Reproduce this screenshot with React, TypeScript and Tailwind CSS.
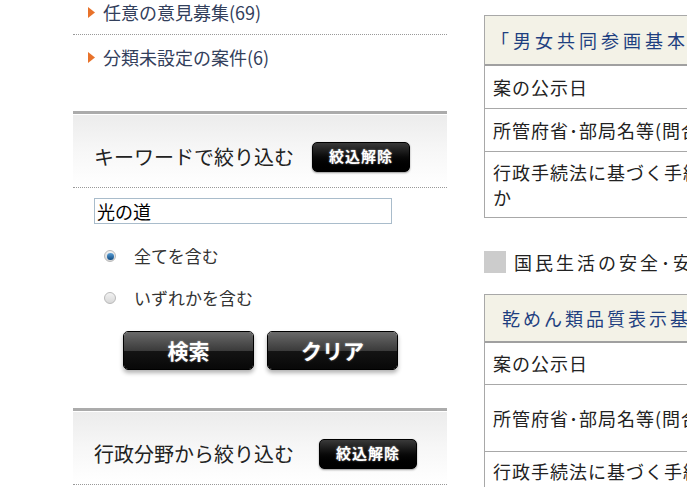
const JP = "font-['Noto_Sans_CJK_JP','Noto_Sans',sans-serif]";

function Arrow() {
  return (
    <svg width="7" height="11" viewBox="0 0 7 11" className="shrink-0">
      <polygon points="0,0 7,5.5 0,11" fill="#e8722a" />
    </svg>
  );
}

function ClearButton() {
  return (
    <span className="inline-flex items-center justify-center w-[98px] h-[30px] rounded-[5px] bg-gradient-to-b from-[#3a3a3a] via-[#0a0a0a] to-black border border-black shadow-[0_1px_2px_rgba(0,0,0,0.4)] text-white text-[15px] font-bold tracking-[1px] [text-shadow:0_0_2px_rgba(255,255,255,0.6)]">
      絞込解除
    </span>
  );
}

function BigButton({ label }: { label: string }) {
  return (
    <button
      type="button"
      className="relative w-[131px] h-[39px] rounded-[5px] border border-black overflow-hidden shadow-[0_3px_4px_rgba(0,0,0,0.3)] text-white text-[21px] font-bold [text-shadow:0_0_2px_rgba(255,255,255,0.5)]"
    >
      <span className="absolute inset-x-0 top-0 h-1/2 bg-gradient-to-b from-[#6a6a6a] to-[#3a3a3a]" />
      <span className="absolute inset-x-0 bottom-0 h-1/2 bg-gradient-to-b from-[#141414] to-[#080808]" />
      <span className="relative">{label}</span>
    </button>
  );
}

function Radio({ checked }: { checked?: boolean }) {
  return (
    <span className="w-[12px] h-[12px] rounded-full border border-[#b9b9b9] bg-gradient-to-b from-[#f2f2f2] to-[#d8d8d8] flex items-center justify-center">
      {checked && <span className="w-[7px] h-[7px] rounded-full bg-gradient-to-b from-[#5aa0d8] to-[#0d4a80]" />}
    </span>
  );
}

function FilterHead({ title, btnOffset }: { title: string; btnOffset: string }) {
  return (
    <div className="border-b border-dotted border-[#999]">
      <div className="h-[76px] border-t-[3px] border-solid border-[#ababab]">
        <div className="h-full border-t border-white bg-gradient-to-b from-[#ececec] via-[#f7f7f7] to-white flex items-center pl-[21px] pt-[11px]">
          <span className="text-[20px] text-[#222]">{title}</span>
          <span className={btnOffset}>
            <ClearButton />
          </span>
        </div>
      </div>
    </div>
  );
}

function Row({ children, h }: { children: React.ReactNode; h: string }) {
  return (
    <div className={`${h} border-b border-[#a8a8a8] flex items-center pl-[8px] text-[18px] tracking-[1px] text-[#222] leading-[25px] whitespace-nowrap`}>
      {children}
    </div>
  );
}

export default function App() {
  return (
    <div className={`w-[687px] h-[487px] overflow-hidden bg-white flex ${JP}`}>
      {/* Left filter column */}
      <div className="ml-[73px] w-[374px] shrink-0">
        <div className="h-[35px] border-b border-dotted border-[#999] flex items-start gap-[8px] pl-[15px] text-[18px] text-[#33405c] leading-[24px]">
          <span className="pt-[7px]"><Arrow /></span>
          任意の意見募集(69)
        </div>
        <div className="h-[76px] flex items-start gap-[8px] pl-[15px] pt-[10px] text-[18px] text-[#33405c] leading-[24px]">
          <span className="pt-[7px]"><Arrow /></span>
          分類未設定の案件(6)
        </div>

        <FilterHead title="キーワードで絞り込む" btnOffset="ml-[18px]" />

        <div className="pl-[21px] pt-[10px]">
          <div className="w-[298px] h-[26px] border border-[#a9bccb] flex items-center pl-[2px] text-[18px] leading-none text-black">
            光の道
          </div>
          <div className="flex items-center h-[42px] mt-[11px] pl-[10px] gap-[18px] text-[17px] text-[#333]">
            <Radio checked />
            全てを含む
          </div>
          <div className="flex items-center h-[42px] pl-[10px] gap-[18px] text-[17px] text-[#333]">
            <Radio />
            いずれかを含む
          </div>
          <div className="flex gap-[13px] pl-[29px] mt-[12px]">
            <BigButton label="検索" />
            <BigButton label="クリア" />
          </div>
        </div>

        <div className="mt-[38px]">
          <FilterHead title="行政分野から絞り込む" btnOffset="ml-[25px]" />
        </div>
      </div>

      {/* Right results column */}
      <div className="ml-[37px] w-[420px] shrink-0 pt-[15px]">
        <div className="border border-[#a8a8a8]">
          <div className="h-[50px] bg-[#f3f2e7] border-b-2 border-[#a0a0a0] flex items-center pl-[6px] text-[18px] tracking-[4px] text-[#1e3f80] whitespace-nowrap">
            「男女共同参画基本計画
          </div>
          <Row h="h-[43px]">案の公示日</Row>
          <Row h="h-[43px]">所管府省･部局名等(問合せ先)</Row>
          <div className="h-[65px] flex flex-col justify-center pl-[8px] text-[18px] tracking-[1px] text-[#222] leading-[25px] whitespace-nowrap">
            <span>行政手続法に基づく手続であるか否</span>
            <span>か</span>
          </div>
        </div>

        <div className="flex items-center gap-[8px] mt-[33px] h-[22px]">
          <span className="w-[22px] h-[22px] bg-[#cccccc]" />
          <span className="text-[18px] tracking-[3px] text-[#222] whitespace-nowrap">国民生活の安全･安心</span>
        </div>

        <div className="border border-[#a8a8a8] mt-[21px]">
          <div className="h-[48px] bg-[#f3f2e7] border-b-2 border-[#a0a0a0] flex items-center pl-[17px] text-[18px] tracking-[3px] text-[#1e3f80] whitespace-nowrap">
            乾めん類品質表示基準
          </div>
          <Row h="h-[42px]">案の公示日</Row>
          <Row h="h-[67px]">所管府省･部局名等(問合せ先)</Row>
          <Row h="h-[40px]">行政手続法に基づく手続であるか</Row>
        </div>
      </div>
    </div>
  );
}
